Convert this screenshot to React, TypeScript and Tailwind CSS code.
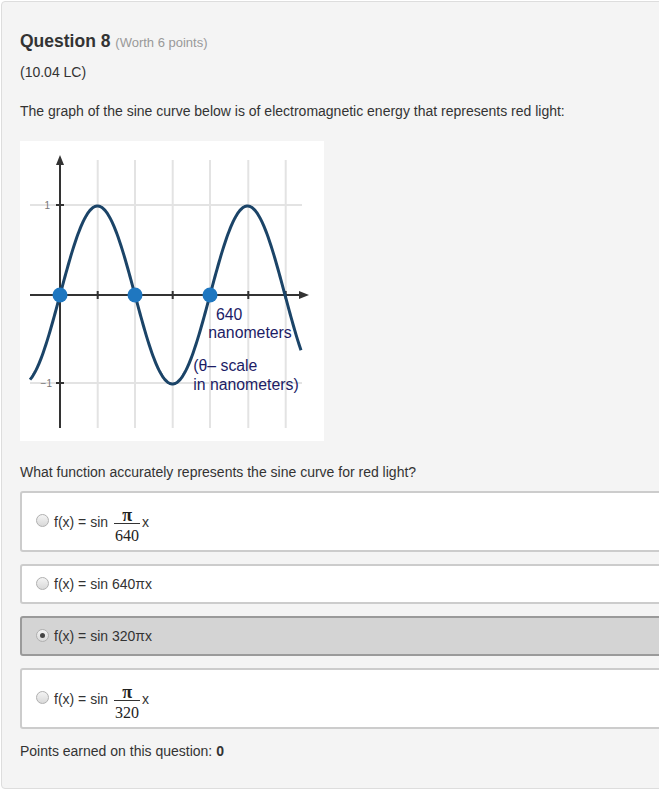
import React from "react";

const sinePath = (() => {
  const pts: string[] = [];
  for (let x = 10; x <= 281; x += 1) {
    const y = 154 - 89 * Math.sin(((x - 40) / 150) * 2 * Math.PI);
    pts.push(`${x === 10 ? "M" : "L"}${x.toFixed(1)},${y.toFixed(2)}`);
  }
  return pts.join(" ");
})();

function Graph() {
  const vx = [77.7, 115, 152.7, 190, 228.3, 265.7];
  return (
    <svg width="304" height="300" viewBox="0 0 304 300" className="block">
      <rect x="0" y="0" width="304" height="300" fill="#ffffff" />
      {vx.map((x) => (
        <line key={x} x1={x} y1="19" x2={x} y2="287" stroke="#e3e3e3" strokeWidth="2" />
      ))}
      <line x1="10" y1="64" x2="282" y2="64" stroke="#e3e3e3" strokeWidth="2" />
      <line x1="10" y1="242" x2="282" y2="242" stroke="#e3e3e3" strokeWidth="2" />
      <line x1="40" y1="22" x2="40" y2="287" stroke="#333" strokeWidth="2" />
      <polygon points="40,14 36,24 44,24" fill="#333" />
      <line x1="10" y1="154" x2="281" y2="154" stroke="#333" strokeWidth="2" />
      <polygon points="289,154 279,150 279,158" fill="#333" />
      {vx.map((x) => (
        <line key={"t" + x} x1={x} y1="150" x2={x} y2="158" stroke="#333" strokeWidth="2" />
      ))}
      <line x1="36" y1="64" x2="44" y2="64" stroke="#333" strokeWidth="2" />
      <line x1="36" y1="242" x2="44" y2="242" stroke="#333" strokeWidth="2" />
      <text x="30" y="68" fontSize="10" fill="#777" textAnchor="end" fontFamily="Liberation Sans, Arial, sans-serif">1</text>
      <text x="32" y="246" fontSize="10" fill="#777" textAnchor="end" fontFamily="Liberation Sans, Arial, sans-serif">−1</text>
      <path d={sinePath} fill="none" stroke="#1b4468" strokeWidth="3" />
      <circle cx="40" cy="154" r="7.5" fill="#1f77c0" />
      <circle cx="115" cy="154" r="7.5" fill="#1f77c0" />
      <circle cx="190" cy="154" r="7.5" fill="#1f77c0" />
      <g fontFamily="Liberation Sans, Arial, sans-serif" fontSize="15.8" fill="#1c1c66">
        <text x="196" y="178.5">640</text>
        <text x="188.3" y="197">nanometers</text>
        <text x="173.3" y="230">(θ– scale</text>
        <text x="173.3" y="249">in nanometers)</text>
      </g>
    </svg>
  );
}

function Radio({ checked }: { checked?: boolean }) {
  return (
    <span className="relative -top-[1px] flex h-[13px] w-[13px] shrink-0 items-center justify-center rounded-full border border-[#b0b0b0] bg-gradient-to-b from-[#f4f4f4] to-[#d9d9d9]">
      {checked && <span className="h-[5px] w-[5px] rounded-full bg-[#444]" />}
    </span>
  );
}

function Frac({ den }: { den: string }) {
  return (
    <span className="ml-[6px] mt-[8px] flex flex-col items-center font-['Liberation_Serif','Times_New_Roman',serif] text-[16px] text-[#222]">
      <span className="h-[16px] text-[18px] font-bold leading-[16px]">π</span>
      <span className="h-[1px] w-[26px] bg-[#333]" />
      <span className="mt-[4px] h-[16px] leading-[16px]">{den}</span>
    </span>
  );
}

function Option({
  children,
  checked,
  tall,
}: {
  children: React.ReactNode;
  checked?: boolean;
  tall?: boolean;
}) {
  return (
    <div
      className={
        "mb-[12px] flex items-center gap-[5px] rounded-[3px] border-2 pl-[14px] text-[14px] leading-[20px] " +
        (tall ? "h-[61px] " : "h-[40px] ") +
        (checked ? "border-[#9a9a9a] bg-[#d4d4d4]" : "border-[#cccccc] bg-white")
      }
    >
      <Radio checked={checked} />
      <div className="flex items-center">{children}</div>
    </div>
  );
}

export default function App() {
  return (
    <div className="h-[792px] w-[659px] overflow-hidden bg-white font-['Liberation_Sans',Arial,sans-serif] text-[#333]">
      <div className="ml-[1px] mt-[1px] box-border h-[788px] w-[730px] rounded-[4px] border border-[#dddddd] bg-[#f4f4f4] pl-[18px] pr-[26px] pt-[29px]">
        <div className="text-[17.5px] font-bold leading-[20px]">
          Question 8 <span className="text-[13px] font-normal text-[#999]">(Worth 6 points)</span>
        </div>
        <div className="mt-[9px] text-[14px] leading-[20px]">(10.04 LC)</div>
        <div className="mt-[19px] text-[14px] leading-[20px]">
          The graph of the sine curve below is of electromagnetic energy that represents red light:
        </div>
        <div className="mt-[20px]">
          <Graph />
        </div>
        <div className="mt-[21px] text-[14px] leading-[20px]">
          What function accurately represents the sine curve for red light?
        </div>
        <div className="mt-[9px]">
          <Option tall>
            <span>f(x) = sin</span>
            <Frac den="640" />
            <span className="ml-[2px]">x</span>
          </Option>
          <Option>
            <span>f(x) = sin 640πx</span>
          </Option>
          <Option checked>
            <span>f(x) = sin 320πx</span>
          </Option>
          <Option tall>
            <span>f(x) = sin</span>
            <Frac den="320" />
            <span className="ml-[2px]">x</span>
          </Option>
        </div>
        <div className="mt-[0px] text-[14px] leading-[20px]">
          Points earned on this question: <span className="font-bold">0</span>
        </div>
      </div>
    </div>
  );
}
